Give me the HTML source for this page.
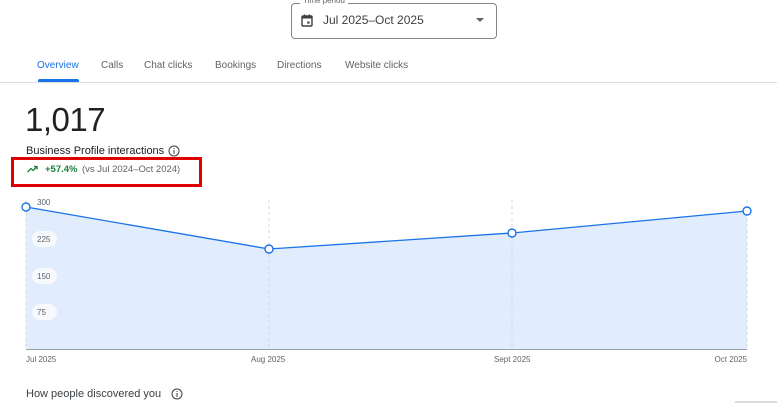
<!DOCTYPE html>
<html><head><meta charset="utf-8"><style>
*{margin:0;padding:0;box-sizing:border-box}
body{width:777px;height:403px;overflow:hidden;background:#fff;font-family:"Liberation Sans",Arial,sans-serif;color:#202124;position:relative}
.abs{position:absolute;white-space:nowrap}
.tab{position:absolute;top:60px;font-size:10px;color:#5f6368}
</style></head><body>
<div class="abs" style="left:291px;top:3px;width:206px;height:36px;border:1px solid #80868b;border-radius:4px"></div>
<div class="abs" style="left:300px;top:-4px;background:#fff;padding:0 3px;font-size:8px;color:#5f6368;line-height:10px">Time period</div>
<svg class="abs" style="left:301px;top:14px" width="12" height="13" viewBox="0 0 12 13"><rect x="1" y="2" width="10" height="10" rx="1" fill="none" stroke="#3c4043" stroke-width="1.4"/><rect x="1" y="2" width="10" height="2.5" fill="#3c4043"/><rect x="3" y="0.5" width="1.3" height="2.5" fill="#3c4043"/><rect x="7.7" y="0.5" width="1.3" height="2.5" fill="#3c4043"/><rect x="6.3" y="7.5" width="2.2" height="2.2" fill="#3c4043"/></svg>
<div class="abs" style="left:323px;top:13px;font-size:12px;color:#3c4043">Jul 2025–Oct 2025</div>
<svg class="abs" style="left:476px;top:18px" width="8" height="5"><path d="M0 0H8L4 4Z" fill="#5f6368"/></svg>

<div class="tab" style="left:37px;color:#1a73e8">Overview</div>
<div class="tab" style="left:101px">Calls</div>
<div class="tab" style="left:144px">Chat clicks</div>
<div class="tab" style="left:215px">Bookings</div>
<div class="tab" style="left:277px">Directions</div>
<div class="tab" style="left:345px">Website clicks</div>
<div class="abs" style="left:38px;top:79px;width:41px;height:3px;background:#1a73e8;border-radius:2px 2px 0 0"></div>
<div class="abs" style="left:0;top:82px;width:777px;height:1px;background:#dadce0"></div>

<div class="abs" style="left:25px;top:101px;font-size:33px;line-height:38px;color:#202124;letter-spacing:-0.5px">1,017</div>
<div class="abs" style="left:26px;top:145px;font-size:11px;color:#202124">Business Profile interactions</div>
<svg class="abs" style="left:168px;top:145px" width="12" height="12"><circle cx="6" cy="6" r="5" fill="none" stroke="#3c4043" stroke-width="1"/><rect x="5.5" y="5" width="1" height="4" fill="#3c4043"/><rect x="5.5" y="3" width="1" height="1" fill="#3c4043"/></svg>
<div class="abs" style="left:11px;top:157px;width:191px;height:30px;border:3px solid #e00000"></div>
<svg class="abs" style="left:27px;top:165px" width="12" height="8"><path d="M0.5 7L4 3.5 6 5.5 10 1.5M7 1.5H10V4.5" fill="none" stroke="#188038" stroke-width="1.3"/></svg>
<div class="abs" style="left:45px;top:164px;font-size:9.5px;color:#188038;font-weight:bold">+57.4%</div>
<div class="abs" style="left:82px;top:164px;font-size:9.5px;color:#5f6368">(vs Jul 2024–Oct 2024)</div>

<svg class="abs" style="left:0;top:0" width="777" height="403">
<path d="M26 207L269 249L512 233L747 211V349H26Z" fill="#e1ecfc"/>
<g stroke="#d3d9e3" stroke-dasharray="3 3" stroke-width="1"><line x1="26" y1="200" x2="26" y2="349"/><line x1="269" y1="200" x2="269" y2="349"/><line x1="512" y1="200" x2="512" y2="349"/><line x1="747" y1="200" x2="747" y2="349"/></g>
<line x1="26" y1="349.5" x2="747" y2="349.5" stroke="#9aa0a6" stroke-width="1"/>
<path d="M26 207L269 249L512 233L747 211" fill="none" stroke="#1a73e8" stroke-width="1.3"/>
<g fill="#fff" stroke="#1a73e8" stroke-width="1.4"><circle cx="26" cy="207" r="4"/><circle cx="269" cy="249" r="4"/><circle cx="512" cy="233" r="4"/><circle cx="747" cy="211" r="4"/></g>
<g fill="#f7f9fd"><rect x="32" y="231" width="25" height="16" rx="8"/><rect x="32" y="268" width="25" height="16" rx="8"/><rect x="32" y="304" width="25" height="16" rx="8"/></g>
<g font-family="Liberation Sans,Arial,sans-serif" font-size="8" fill="#5f6368"><text x="37" y="205">300</text><text x="37" y="242">225</text><text x="37" y="279">150</text><text x="37" y="315">75</text>
<text x="26" y="362">Jul 2025</text><text x="251" y="362">Aug 2025</text><text x="494" y="362">Sept 2025</text><text x="747" y="362" text-anchor="end">Oct 2025</text></g>
</svg>
<div class="abs" style="left:26px;top:388px;font-size:11px;color:#3c4043">How people discovered you</div>
<svg class="abs" style="left:171px;top:388px" width="12" height="12"><circle cx="6" cy="6" r="5" fill="none" stroke="#3c4043" stroke-width="1"/><rect x="5.5" y="5" width="1" height="4" fill="#3c4043"/><rect x="5.5" y="3" width="1" height="1" fill="#3c4043"/></svg>
<div class="abs" style="left:735px;top:401px;width:42px;height:2px;background:#dadce0"></div>
</body></html>
